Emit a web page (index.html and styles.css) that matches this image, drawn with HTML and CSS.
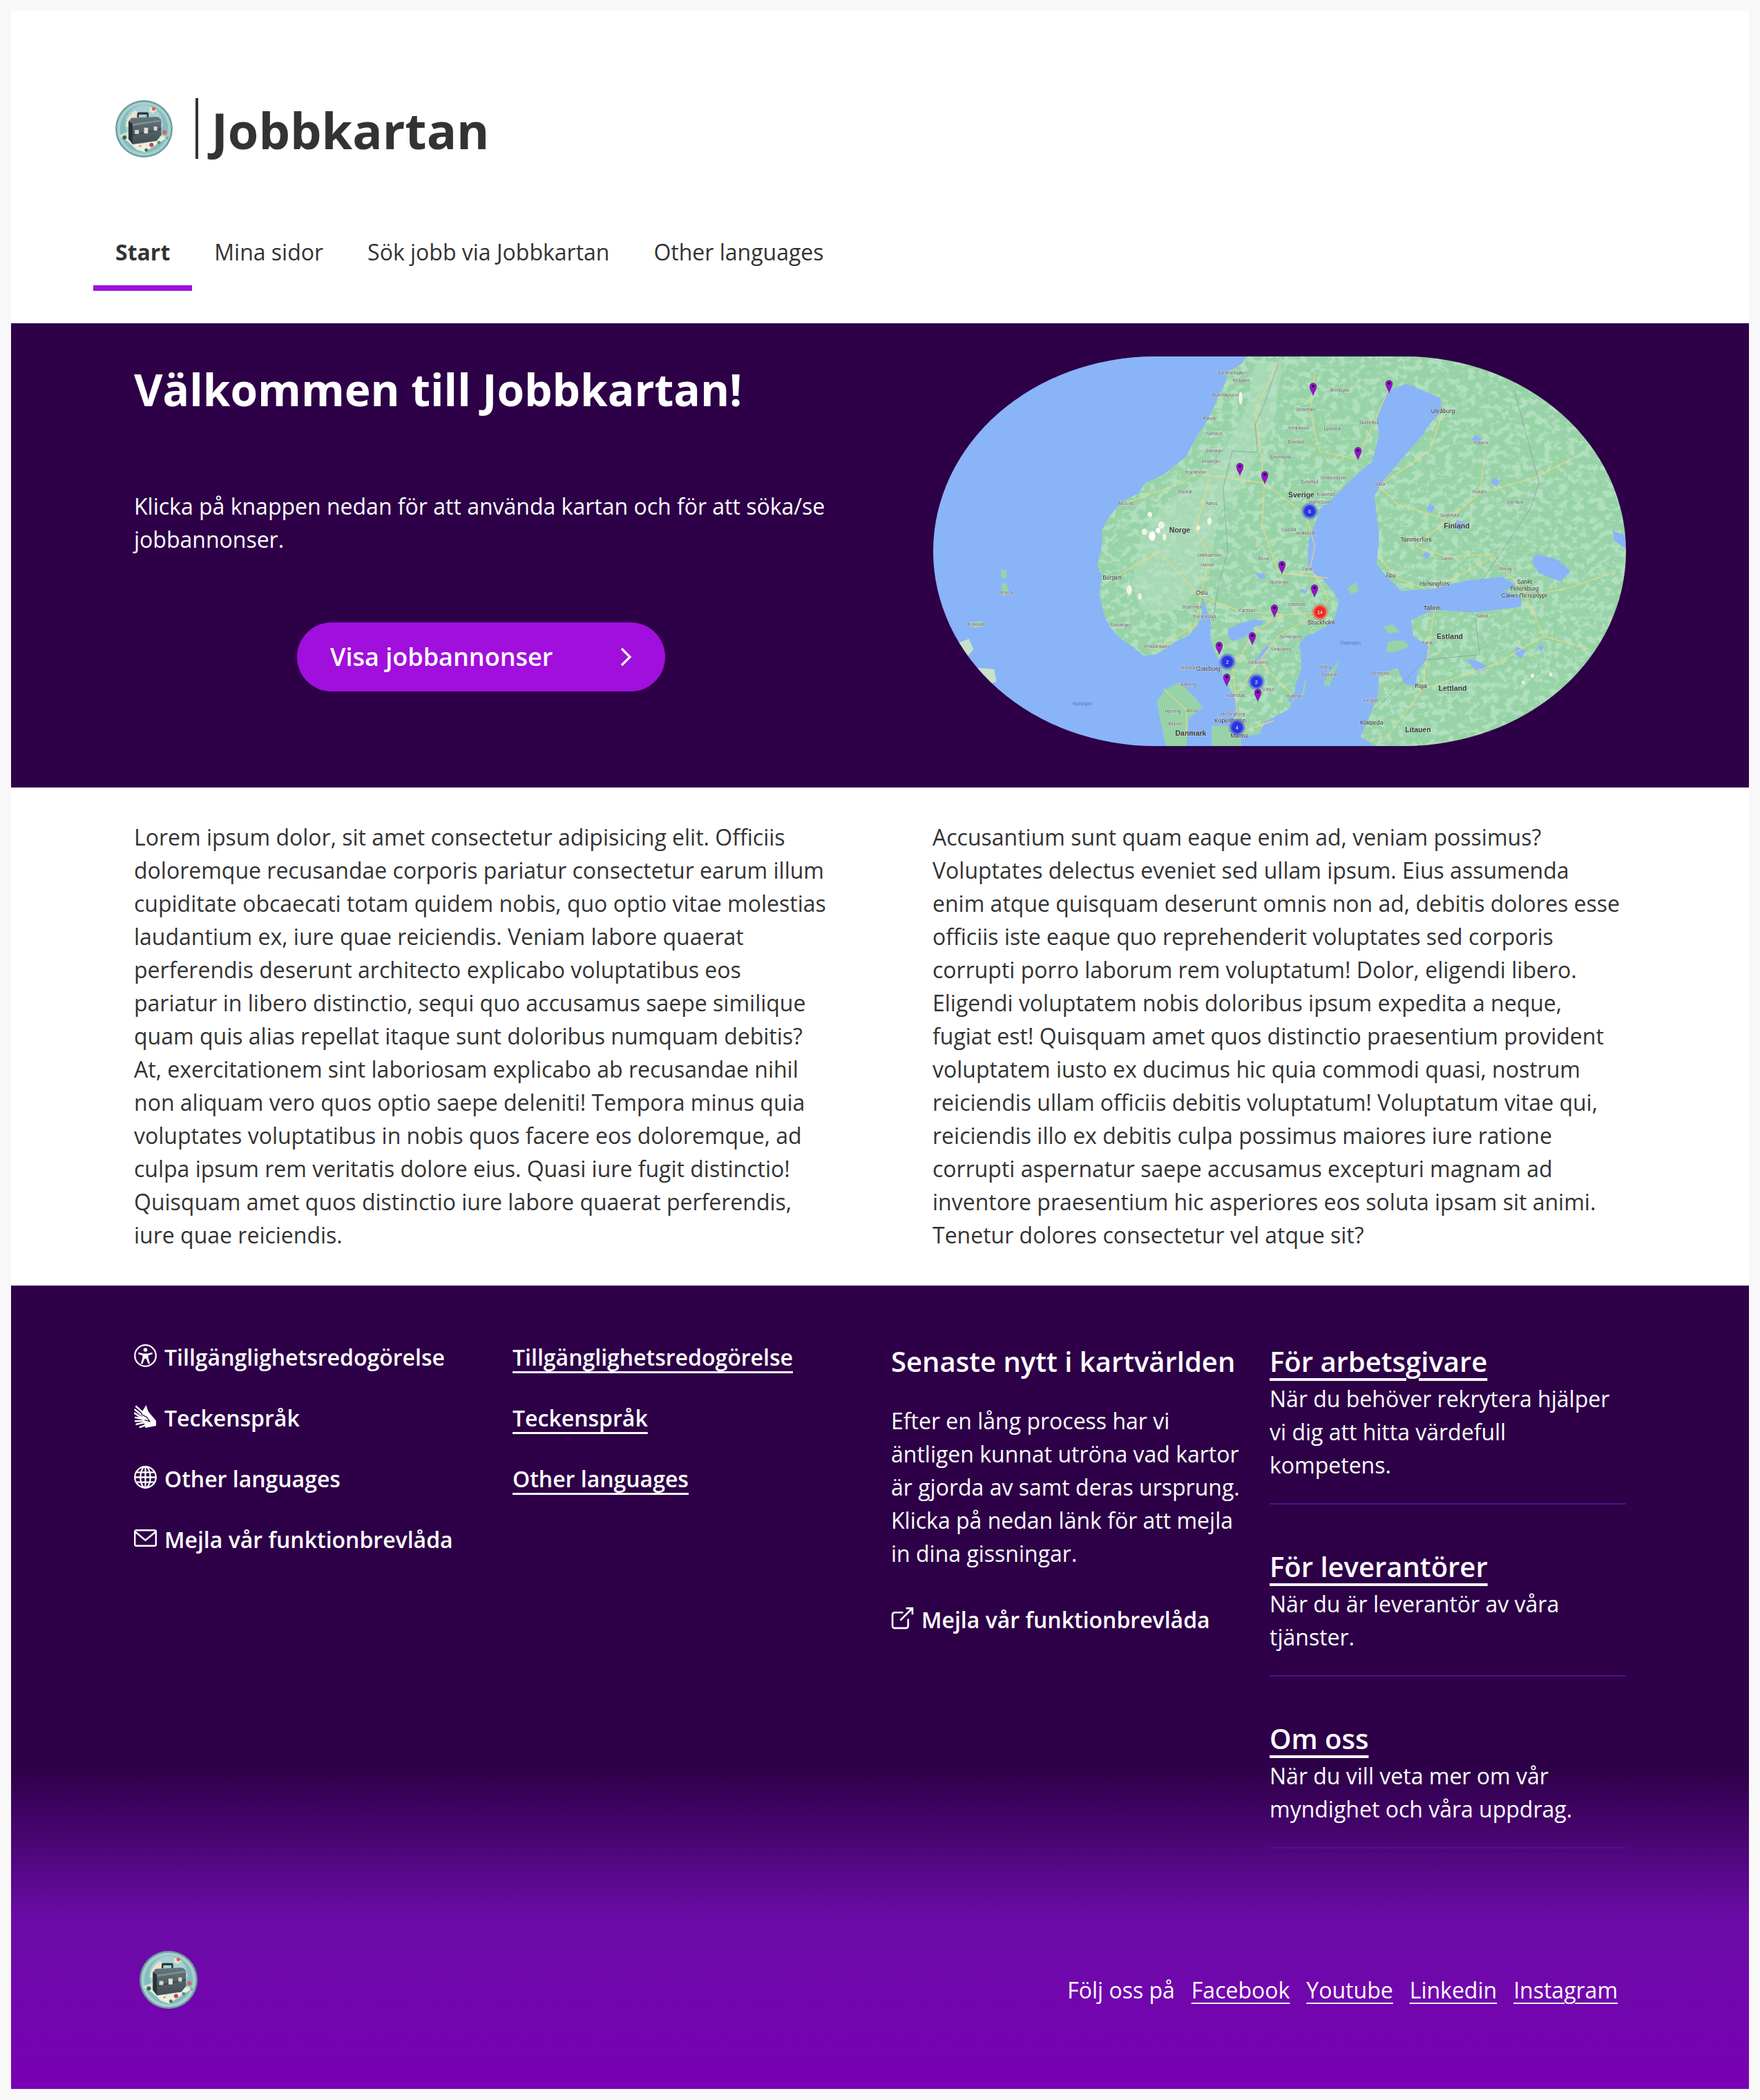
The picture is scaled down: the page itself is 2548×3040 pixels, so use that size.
FILE: index.html
```html
<!DOCTYPE html>
<html lang="sv">
<head>
<meta charset="utf-8">
<title>Jobbkartan</title>
<link rel="stylesheet" href="styles.css">
</head>
<body>
<svg class="defs" width="0" height="0" aria-hidden="true">
  <defs>
    <linearGradient id="case-grad" x1="0" y1="0" x2="0" y2="1"><stop offset="0" stop-color="#66767c"/><stop offset="1" stop-color="#414e54"/></linearGradient>
    <symbol id="logo" viewBox="0 0 100 100">
      <circle cx="50" cy="50" r="50" fill="#6a9fa0"/>
      <circle cx="50" cy="50" r="47" fill="#a9cfcd"/>
      <circle cx="50" cy="50" r="42" fill="#84bcbd"/>
      <circle cx="50" cy="42" r="33" fill="#a5d0d4"/>
      <path d="M18 46c1-13 8-23 17-28l7 5-5 10-5 3-2 12z" fill="#ece1cc"/>
      <path d="M60 12l13 5-7 6-7-3zM72 26l10 18-7 4-5-12z" fill="#ece1cc"/>
      <path d="M5 62l30-13 58 15-42 25z" fill="#cfe3cb"/>
      <path d="M14 65l23 21 14 5 38-25-14-3-28 14z" fill="#e9f0de"/>
      <path d="M38 30v-6q0-3 3-3h14q3 0 3 3v6h-3v-5H41v5z" fill="#2b3438"/>
      <path d="M23 37l5-6 46-2 6 5v27l-8 10-42 6-7-9z" fill="url(#case-grad)"/>
      <path d="M23 37l7 4v35l-7-9z" fill="#283236"/>
      <path d="M30 41l50-7v3l-50 8z" fill="#7d8d92"/>
      <path d="M30 60l50-11v2l-50 11z" fill="#37434a"/>
      <rect x="34" y="52" width="7" height="7" fill="#d6d6cb"/>
      <rect x="50" y="48" width="7" height="10" fill="#e0e0d6"/>
      <rect x="67" y="46" width="6" height="7" fill="#d6d6cb"/>
      <circle cx="67" cy="15" r="3.200" fill="#d8616a"/>
      <circle cx="86" cy="56" r="3.600" fill="#d8616a"/>
      <circle cx="63" cy="78" r="3.600" fill="#d33d4d"/>
      <circle cx="16" cy="65" r="3.600" fill="#3f5e60"/>
      <circle cx="54" cy="87" r="3" fill="#4b6f70"/>
      <circle cx="76" cy="74" r="3" fill="#5f8a86"/>
      <circle cx="90" cy="66" r="3" fill="#7fb3a8"/>
      <circle cx="43" cy="80" r="2" fill="#e0908c"/>
    </symbol>
    <symbol id="i-access" viewBox="0 0 32 32">
      <circle cx="16" cy="16" r="14.800" fill="none" stroke="#fff" stroke-width="2.200"/>
      <circle cx="16" cy="7.800" r="2.700" fill="#fff"/>
      <path d="M6.500 11.500l6.500 1.600h6l6.500-1.600.6 2.300-6.100 1.700v3.400l2.400 8-2.400.7-2.900-7.400h-2.200l-2.900 7.400-2.400-.7 2.400-8v-3.400L5.900 13.800z" fill="#fff"/>
    </symbol>
    <symbol id="i-sign" viewBox="0 0 32 32">
      <path d="M3 2l12 11M1.500 6.500l11 9M1 11.500l11 7M2 17.500l12 2M2 22.500l12-.5M3.500 27l11-2.500M8.500 31l8-3" fill="none" stroke="#fff" stroke-width="2.500" stroke-linecap="round"/>
      <path d="M11 10l6-10 3 9 11 13v7l-15 3-3-12z" fill="#fff"/>
      <path d="M10 13l8 4 4 6-7-2" fill="none" stroke="#2d0047" stroke-width="1.200"/>
    </symbol>
    <symbol id="i-globe" viewBox="0 0 32 32">
      <g fill="none" stroke="#fff" stroke-width="2.200">
        <circle cx="16" cy="16" r="14.800"/>
        <ellipse cx="16" cy="16" rx="7" ry="14.800"/>
        <path d="M16 1.200v29.600M1.200 16h29.600M3.500 9h25M3.500 23h25"/>
      </g>
    </symbol>
    <symbol id="i-mail" viewBox="0 0 32 32">
      <rect x="1.200" y="5" width="29.600" height="22" rx="2" fill="none" stroke="#fff" stroke-width="2.400"/>
      <path d="M2 7.500l14 11.500L30 7.500" fill="none" stroke="#fff" stroke-width="2.400"/>
    </symbol>
    <symbol id="i-ext" viewBox="0 0 32 32">
      <path d="M24 17v10a3 3 0 0 1-3 3H5a3 3 0 0 1-3-3V11a3 3 0 0 1 3-3h12" fill="none" stroke="#fff" stroke-width="2.600"/>
      <path d="M21 2h9v9M30 2L13 19" fill="none" stroke="#fff" stroke-width="2.600"/>
    </symbol>
    <symbol id="pin" viewBox="0 0 20 36">
      <path d="M10 35C8 27 .8 19 .8 10a9.200 9.200 0 0 1 18.400 0C19.200 19 12 27 10 35z" fill="#9b0ed6" stroke="#30103f" stroke-width=".8"/>
      <circle cx="10" cy="9.500" r="3.400" fill="#000"/>
    </symbol>
    <radialGradient id="halo-blue"><stop offset=".55" stop-color="#2a33e8"/><stop offset=".75" stop-color="#3a49dd" stop-opacity=".55"/><stop offset="1" stop-color="#5066d8" stop-opacity=".1"/></radialGradient>
    <radialGradient id="halo-red"><stop offset=".55" stop-color="#f0281e"/><stop offset=".75" stop-color="#f04a3a" stop-opacity=".55"/><stop offset="1" stop-color="#f06a5a" stop-opacity=".1"/></radialGradient>
    <filter id="mottle" x="0" y="0" width="100%" height="100%" color-interpolation-filters="sRGB">
      <feTurbulence type="fractalNoise" baseFrequency=".06 .04" numOctaves="3" seed="11"/>
      <feColorMatrix values="0 0 0 0 .7  0 0 0 0 .88  0 0 0 0 .75  4 4 0 0 -3.850"/>
    </filter>
    <clipPath id="land-clip">
      <path id="land" d="M700 42L690 70 660 100 655 140 640 190 625 250 610 300 590 350 570 420 540 460 520 490 480 520 465 560 430 590 400 650 385 700 385 760 380 800 375 830 385 870 380 950 392 1028 402 1063 423 1106 453 1141 478 1176 508 1167 543 1124 573 1098 593 1063 603 1028 604 950 612 990 624 1054 621 1098 631 1159 646 1202 649 1246 659 1289 674 1324 681 1368 676 1403 671 1437 676 1468 699 1477 729 1472 739 1429 764 1403 794 1376 804 1342 807 1289 820 1220 820 1167 815 1133 830 1098 847 1089 875 1063 895 1028 902 967 887 923 865 880 845 863 835 828 835 767 840 706 850 680 860 620 900 560 940 490 975 440 990 340 985 280 1000 200 1010 170 1050 145 1085 170 1125 200 1125 250 1100 300 1085 340 1055 400 1030 450 1000 510 980 570 985 640 990 720 985 830 1010 880 1040 930 1110 920 1180 890 1260 875 1290 910 1262 930 1300 950 1300 990 1270 995 1200 1010 1110 1000 1060 1040 1065 1100 1100 1140 1095 1185 1075 1230 1070 1290 1045 1280 1030 1220 990 1245 988 1320 970 1400 950 1480 980 1516 1529 1516 1529 42z"/>
    </clipPath>
  </defs>
</svg>

<div class="page">
  <header class="site-header">
    <a class="brand" href="#">
      <svg class="brand-logo"><use href="#logo"/></svg>
      <span class="brand-name">Jobbkartan</span>
    </a>
    <nav class="main-nav">
      <a class="nav-item is-active" href="#">Start</a>
      <a class="nav-item" href="#">Mina sidor</a>
      <a class="nav-item" href="#">Sök jobb via Jobbkartan</a>
      <a class="nav-item" href="#">Other languages</a>
    </nav>
  </header>

  <section class="hero">
    <div class="hero-text">
      <h1>Välkommen till Jobbkartan!</h1>
      <p>Klicka på knappen nedan för att använda kartan och för att söka/se jobbannonser.</p>
      <a class="cta" href="#">
        <span>Visa jobbannonser</span>
        <svg class="cta-arrow" viewBox="0 0 18 28"><path d="M3 2l12 12L3 26" fill="none" stroke="#fff" stroke-width="3.200"/></svg>
      </a>
    </div>
    <div class="map">
      <svg class="map-svg" viewBox="0 0 1003 564" preserveAspectRatio="none" role="img" aria-label="Karta över Sverige med jobbannonser">
        <rect width="1003" height="564" fill="#8ab4f8"/>
        <g transform="scale(.6633 .3827) translate(-17 -42)">
          <use href="#land" fill="#97d3a7"/>
          <g clip-path="url(#land-clip)">
            <rect x="17" y="42" width="1512" height="1474" filter="url(#mottle)"/>
            <path d="M720 60L700 240 650 400 600 500 520 600 470 720 450 900 470 1000 560 1000 620 860 640 640 700 500 760 300 780 60z" fill="#b5dfc2" opacity=".5"/>
            <g fill="#f3f2e8">
              <ellipse cx="490" cy="640" rx="5" ry="10"/><ellipse cx="515" cy="680" rx="7" ry="14"/><ellipse cx="478" cy="705" rx="6" ry="12"/>
              <ellipse cx="522" cy="725" rx="4" ry="12"/><ellipse cx="445" cy="925" rx="6" ry="18"/><ellipse cx="468" cy="950" rx="4" ry="12"/>
              <ellipse cx="688" cy="200" rx="4" ry="24"/><ellipse cx="620" cy="665" rx="5" ry="14"/><ellipse cx="595" cy="690" rx="4" ry="10"/>
              <ellipse cx="1325" cy="1250" rx="4" ry="8"/><ellipse cx="1365" cy="1245" rx="3" ry="7"/><ellipse cx="1305" cy="1275" rx="3" ry="7"/>
            </g>
            <g fill="#fff"><ellipse cx="495" cy="722" rx="7" ry="18"/><ellipse cx="508" cy="700" rx="5" ry="10"/></g>
          </g>
          <g fill="#8ab4f8">
            <path d="M660 1075l22-20 36-18 22 5-6 15-16 8-5 20-22 22-22 12-8-22z"/>
            <path d="M745 1135l6 5-24 65-14 0z"/>
            <path d="M1335 790l45 20 28 45-22 38-48-32-15-48z"/>
            <path d="M1500 700l29 20v50l-25-30z"/>
            <path d="M1180 1190l20 0 30 30-25 15z"/>
            <path d="M1160 660l18 14-8 30-16-18zM1240 500l12 12-4 24-14-16zM1100 600l12 10-6 24-12-12zM1200 340l14 12-8 20-14-16zM1090 780l12 8-6 20-10-10zM1290 1140l20 14-10 30-14-20zM1340 1130l10 8-5 20-8-10z"/>
            <path d="M790 1330h12l-4 30zM720 860l20 5 2 16-14 0zM820 920l14 8-4 12-12-8z"/>
          </g>
          <g fill="#97d3a7">
            <path d="M525 1300l30-25 35 60 15 35-30 40-5 106H525l-15-120-5-50z"/>
            <path d="M625 1440l60 0 5 76H625z"/>
            <path d="M868 1285l12-45 25-50-15 60-8 40z"/>
            <path d="M820 1330l8-60 4-8-6 60z"/>
            <path d="M1010 1120l35-5 10 25-30 20-20 0z"/>
            <path d="M1000 1065l20-10 15 30-25 5z"/>
            <path d="M920 920l20-25 5 35-15 10z"/>
            <path d="M97 1050l25-8 5 20-20 8zM165 850l12 0 0 30-12 0zM165 900l12 0 5 40-12 10z"/>
          </g>
          <path d="M115 1220l35 5 5 45-20 20-25-40zM65 1130l30-20 10 40-15 30z" fill="#c8e2c9"/>
          <g class="roads">
            <path d="M590 485L740 520 830 640 850 760 840 840 880 960 860 1010 780 1020 720 1080 690 1170 670 1200 680 1400M600 950L680 1000 780 1020M600 950L620 800 590 700 620 500M410 880L510 780 600 950M1090 920L1030 880 990 800M1110 920L1240 800 1310 940M1110 1010L1085 1300 1000 1500M1310 950L1350 1100 1240 1210 1085 1300M850 100L840 250 860 400 940 430M1010 170L980 290 945 420M1130 250L1100 400 1000 520M690 1190L730 1200 800 1320M760 1420L680 1470M1220 420L1210 560 1140 660 1070 760M740 520L720 250 770 60M430 600L560 520 590 485M500 1150L590 1060 600 960M860 1010L770 1100 730 1190 680 1320M740 520L735 680 770 860 880 880M1140 660L1030 600 990 530M1070 760L1140 800 1240 790M1350 1100L1450 1150M1210 560L1330 500 1420 420M1300 950L1400 920 1500 860M520 1300L570 1380 570 1480" />
          </g>
          <path d="M650 540L670 400 725 405 720 300 740 220 770 70M650 540L660 780 640 900 625 1075M1285 170L1340 520 1320 620 1250 800 1210 900M1200 1030L1210 1170 1090 1190 980 1380" fill="none" stroke="#8c9aa0" stroke-width="1.500"/>
        </g>
        <g class="map-labels">
          <text x="533" y="204" class="lbl-lg">Sverige</text>
          <text x="357" y="255" class="lbl-lg">Norge</text>
          <text x="758" y="249" class="lbl-lg">Finland</text>
          <text x="748" y="409" class="lbl-lg">Estland</text>
          <text x="752" y="484" class="lbl-lg">Lettland</text>
          <text x="702" y="544" class="lbl-lg">Litauen</text>
          <text x="373" y="549" class="lbl-lg">Danmark</text>
          <text x="443" y="552" class="lbl-md">Malmö</text>
          <text x="430" y="530" class="lbl-md">Köpenhamn</text>
          <text x="389" y="345" class="lbl-md">Oslo</text>
          <text x="726" y="332" class="lbl-md">Helsingfors</text>
          <text x="722" y="367" class="lbl-md">Tallinn</text>
          <text x="706" y="480" class="lbl-md">Riga</text>
          <text x="259" y="323" class="lbl-md">Bergen</text>
          <text x="699" y="268" class="lbl-md">Tammerfors</text>
          <text x="738" y="82" class="lbl-md">Uleåborg</text>
          <text x="856" y="329" class="lbl-md">Sankt</text>
          <text x="856" y="339" class="lbl-md">Petersburg</text>
          <text x="856" y="349" class="lbl-md">Санкт-Петербург</text>
          <text x="562" y="388" class="lbl-md">Stockholm</text>
          <text x="398" y="455" class="lbl-md">Göteborg</text>
          <text x="635" y="533" class="lbl-md">Klaipeda</text>
          <text x="662" y="320" class="lbl-md">Åbo</text>
          <text x="518" y="408" class="lbl">Norrköping</text>
          <text x="504" y="426" class="lbl">Linköping</text>
          <text x="470" y="445" class="lbl">Jönköping</text>
          <text x="438" y="493" class="lbl">Halmstad</text>
          <text x="434" y="520" class="lbl">Helsingborg</text>
          <text x="380" y="170" class="lbl">Trondheim</text>
          <text x="526" y="361" class="lbl">Västerås</text>
          <text x="541" y="310" class="lbl">Gävle</text>
          <text x="501" y="329" class="lbl">Borlänge</text>
          <text x="539" y="258" class="lbl">Hudiksvall</text>
          <text x="515" y="253" class="lbl">Ljusdal</text>
          <text x="478" y="295" class="lbl">Mora</text>
          <text x="631" y="98" class="lbl">Skellefteå</text>
          <text x="589" y="51" class="lbl">Arvidsjaur</text>
          <text x="539" y="79" class="lbl">Storuman</text>
          <text x="529" y="106" class="lbl">Vilhelmina</text>
          <text x="578" y="107" class="lbl">Lycksele</text>
          <text x="525" y="126" class="lbl">Dorotea</text>
          <text x="503" y="148" class="lbl">Strömsund</text>
          <text x="579" y="178" class="lbl">Örnsköldsvik</text>
          <text x="545" y="184" class="lbl">Sollefteå</text>
          <text x="569" y="202" class="lbl">Kramfors</text>
          <text x="561" y="213" class="lbl">Härnösand</text>
          <text x="433" y="26" class="lbl">Sandnessjøen</text>
          <text x="446" y="37" class="lbl">Mosjøen</text>
          <text x="423" y="58" class="lbl">Brønnøysund</text>
          <text x="400" y="92" class="lbl">Rørvik</text>
          <text x="407" y="114" class="lbl">Namsos</text>
          <text x="407" y="139" class="lbl">Steinkjer</text>
          <text x="402" y="154" class="lbl">Levanger</text>
          <text x="279" y="215" class="lbl">Ålesund</text>
          <text x="364" y="198" class="lbl">Oppdal</text>
          <text x="403" y="215" class="lbl">Røros</text>
          <text x="400" y="290" class="lbl">Lillehammer</text>
          <text x="397" y="304" class="lbl">Hamar</text>
          <text x="271" y="391" class="lbl">Stavanger</text>
          <text x="375" y="365" class="lbl">Drammen</text>
          <text x="393" y="379" class="lbl">Fredrikstad</text>
          <text x="454" y="370" class="lbl">Karlstad</text>
          <text x="324" y="422" class="lbl">Kristiansand</text>
          <text x="568" y="452" class="lbl">Visby</text>
          <text x="573" y="463" class="lbl">Gotland</text>
          <text x="523" y="494" class="lbl">Kalmar</text>
          <text x="485" y="484" class="lbl">Växjö</text>
          <text x="647" y="187" class="lbl">Vasa</text>
          <text x="791" y="198" class="lbl">Kuopio</text>
          <text x="842" y="213" class="lbl">Joensuu</text>
          <text x="744" y="295" class="lbl">Lahtis</text>
          <text x="747" y="232" class="lbl">Jyväskylä</text>
          <text x="793" y="127" class="lbl">Kajana</text>
          <text x="716" y="417" class="lbl">Pärnu</text>
          <text x="647" y="461" class="lbl">Ventspils</text>
          <text x="633" y="500" class="lbl">Liepāja</text>
          <text x="62" y="390" class="lbl">Kirkwall</text>
          <text x="105" y="344" class="lbl">Lerwick</text>
          <text x="828" y="310" class="lbl">Viborg</text>
          <text x="795" y="378" class="lbl">Narva</text>
          <text x="369" y="477" class="lbl">Aalborg</text>
          <text x="375" y="515" class="lbl">Århus</text>
          <text x="347" y="516" class="lbl">Herning</text>
          <text x="350" y="534" class="lbl">Billund</text>
          <text x="370" y="453" class="lbl">Hirtshals</text>
          <text x="604" y="417" class="water">Östersjön</text>
          <text x="216" y="505" class="water">Nordsjön</text>
        </g>
        <g class="clusters">
          <circle cx="545" cy="224" r="13" fill="url(#halo-blue)"/><text x="545" y="227" class="c-num">6</text>
          <circle cx="560" cy="370" r="13" fill="url(#halo-red)"/><text x="560" y="373" class="c-num">14</text>
          <circle cx="426" cy="442" r="13" fill="url(#halo-blue)"/><text x="426" y="445" class="c-num">2</text>
          <circle cx="468" cy="471" r="13" fill="url(#halo-blue)"/><text x="468" y="474" class="c-num">2</text>
          <circle cx="440" cy="537" r="13" fill="url(#halo-blue)"/><text x="440" y="540" class="c-num">4</text>
        </g>
        <g class="pins">
          <use href="#pin" x="543" y="38" width="14" height="19"/>
          <use href="#pin" x="653" y="34" width="14" height="19"/>
          <use href="#pin" x="608" y="131" width="14" height="19"/>
          <use href="#pin" x="437" y="154" width="14" height="19"/>
          <use href="#pin" x="473" y="166" width="14" height="19"/>
          <use href="#pin" x="498" y="296" width="14" height="19"/>
          <use href="#pin" x="545" y="330" width="14" height="19"/>
          <use href="#pin" x="487" y="359" width="14" height="19"/>
          <use href="#pin" x="455" y="399" width="14" height="19"/>
          <use href="#pin" x="407" y="413" width="14" height="19"/>
          <use href="#pin" x="418" y="459" width="14" height="19"/>
          <use href="#pin" x="463" y="481" width="14" height="19"/>
        </g>
      </svg>
    </div>
  </section>

  <section class="intro">
    <p>Lorem ipsum dolor, sit amet consectetur adipisicing elit. Officiis doloremque recusandae corporis pariatur consectetur earum illum cupiditate obcaecati totam quidem nobis, quo optio vitae molestias laudantium ex, iure quae reiciendis. Veniam labore quaerat perferendis deserunt architecto explicabo voluptatibus eos pariatur in libero distinctio, sequi quo accusamus saepe similique quam quis alias repellat itaque sunt doloribus numquam debitis? At, exercitationem sint laboriosam explicabo ab recusandae nihil non aliquam vero quos optio saepe deleniti! Tempora minus quia voluptates voluptatibus in nobis quos facere eos doloremque, ad culpa ipsum rem veritatis dolore eius. Quasi iure fugit distinctio! Quisquam amet quos distinctio iure labore quaerat perferendis, iure quae reiciendis.</p>
    <p>Accusantium sunt quam eaque enim ad, veniam possimus? Voluptates delectus eveniet sed ullam ipsum. Eius assumenda enim atque quisquam deserunt omnis non ad, debitis dolores esse officiis iste eaque quo reprehenderit voluptates sed corporis corrupti porro laborum rem voluptatum! Dolor, eligendi libero. Eligendi voluptatem nobis doloribus ipsum expedita a neque, fugiat est! Quisquam amet quos distinctio praesentium provident voluptatem iusto ex ducimus hic quia commodi quasi, nostrum reiciendis ullam officiis debitis voluptatum! Voluptatum vitae qui, reiciendis illo ex debitis culpa possimus maiores iure ratione corrupti aspernatur saepe accusamus excepturi magnam ad inventore praesentium hic asperiores eos soluta ipsam sit animi. Tenetur dolores consectetur vel atque sit?</p>
  </section>

  <footer class="site-footer">
    <div class="footer-cols">
      <ul class="link-list">
        <li><a class="icon-link" href="#"><svg class="icon"><use href="#i-access"/></svg>Tillgänglighetsredogörelse</a></li>
        <li><a class="icon-link" href="#"><svg class="icon"><use href="#i-sign"/></svg>Teckenspråk</a></li>
        <li><a class="icon-link" href="#"><svg class="icon"><use href="#i-globe"/></svg>Other languages</a></li>
        <li><a class="icon-link" href="#"><svg class="icon"><use href="#i-mail"/></svg>Mejla vår funktionbrevlåda</a></li>
      </ul>
      <ul class="link-list">
        <li><a class="under-link" href="#">Tillgänglighetsredogörelse</a></li>
        <li><a class="under-link" href="#">Teckenspråk</a></li>
        <li><a class="under-link" href="#">Other languages</a></li>
      </ul>
      <div class="news">
        <h2>Senaste nytt i kartvärlden</h2>
        <p>Efter en lång process har vi äntligen kunnat utröna vad kartor är gjorda av samt deras ursprung. Klicka på nedan länk för att mejla in dina gissningar.</p>
        <a class="icon-link" href="#"><svg class="icon"><use href="#i-ext"/></svg>Mejla vår funktionbrevlåda</a>
      </div>
      <div class="promos">
        <article class="promo">
          <a class="promo-title" href="#">För arbetsgivare</a>
          <p>När du behöver rekrytera hjälper vi dig att hitta värdefull kompetens.</p>
        </article>
        <article class="promo">
          <a class="promo-title" href="#">För leverantörer</a>
          <p>När du är leverantör av våra tjänster.</p>
        </article>
        <article class="promo">
          <a class="promo-title" href="#">Om oss</a>
          <p>När du vill veta mer om vår myndighet och våra uppdrag.</p>
        </article>
      </div>
    </div>
    <div class="footer-bottom">
      <svg class="footer-logo"><use href="#logo"/></svg>
      <div class="social">
        <span>Följ oss på</span>
        <a href="#">Facebook</a>
        <a href="#">Youtube</a>
        <a href="#">Linkedin</a>
        <a href="#">Instagram</a>
      </div>
    </div>
  </footer>
</div>
</body>
</html>
```

FILE: styles.css
```css
* { box-sizing: border-box; }
html, body { margin: 0; padding: 0; }
body {
  background: #f8f8f8;
  padding: 16px;
  font-family: "Open Sans", "Noto Sans", sans-serif;
  font-size: 32px;
  line-height: 48px;
  color: #333;
}
.defs { position: absolute; }
a { color: inherit; }
p { margin: 0; }
.page { background: #fff; width: 2516px; height: 3008px; }

.site-header { height: 452px; padding: 126px 0 0 119px; display: flex; flex-direction: column; }
.brand { display: flex; align-items: flex-start; text-decoration: none; color: #333; height: 88px; }
.brand-logo { width: 83px; height: 83px; margin: 3px 33px 0 32px; }
.brand-name {
  border-left: 4px solid #333;
  padding: 2px 0 0 19px;
  font-size: 72px;
  font-weight: 700;
  line-height: 88px;
  height: 88px;
  display: block;
}
.main-nav { display: flex; margin-top: 105px; }
.nav-item {
  display: block;
  padding: 0 32px;
  height: 86px;
  line-height: 60px;
  text-decoration: none;
  color: #333;
}
.nav-item.is-active { font-weight: 700; border-bottom: 8px solid #a00fdb; }

.hero {
  background: #2d0047;
  height: 672px;
  display: flex;
  padding: 48px 178px 60px;
  gap: 154px;
  color: #fff;
}
.hero-text { width: 1003px; flex: none; }
.hero h1 { margin: 21px 0 118px; font-size: 64px; line-height: 54px; font-weight: 700; }
.cta {
  display: flex;
  align-items: center;
  justify-content: space-between;
  width: 533px;
  height: 100px;
  margin: 96px 0 0 236px;
  padding: 0 48px;
  border-radius: 50px;
  background: #a00fdb;
  color: #fff;
  text-decoration: none;
  font-size: 36px;
  font-weight: 600;
}
.cta-arrow { width: 18px; height: 28px; }
.map { width: 1003px; height: 564px; flex: none; border-radius: 32% / 50%; overflow: hidden; }
.map-svg { display: block; width: 100%; height: 100%; filter: blur(.45px); }
.roads { fill: none; stroke: #f3d67e; stroke-width: 1.1px; }
.roads path { vector-effect: non-scaling-stroke; }
.map-labels text { font-family: "Liberation Sans", sans-serif; text-anchor: middle; fill: #333; stroke: #fff; stroke-width: .5px; paint-order: stroke; }
.map-labels .lbl { font-size: 6.5px; fill: #4a4a4a; }
.map-labels .lbl-md { font-size: 8.5px; fill: #222; }
.map-labels .lbl-lg { font-size: 10.5px; font-weight: 700; fill: #333; }
.map-labels .water { font-size: 7px; fill: #4a78c8; stroke: none; }
.c-num { font-family: "Liberation Sans", sans-serif; font-size: 7px; fill: #fff; text-anchor: middle; }

.intro {
  display: flex;
  gap: 153px;
  height: 721px;
  padding: 48px 178px 0;
}
.intro p { width: 1003px; flex: none; }

.site-footer {
  height: 1163px;
  color: #fff;
  background: linear-gradient(to bottom, #2d0047 0, #2d0047 60%, #6a0ca6 79%, #7a00b5 100%);
  padding: 80px 178px 0;
  display: flex;
  flex-direction: column;
}
.footer-cols { display: grid; grid-template-columns: repeat(4, 548px); height: 840px; }
.link-list { list-style: none; margin: 0; padding: 0; }
.link-list li { height: 88px; }
.icon-link { display: flex; align-items: center; gap: 11px; text-decoration: none; font-weight: 600; white-space: nowrap; }
.icon { width: 33px; height: 33px; flex: none; margin-top: -6px; }
.under-link { font-weight: 600; text-decoration: underline; text-decoration-thickness: 3px; text-underline-offset: 8px; text-decoration-skip-ink: none; }
.news { padding-right: 32px; }
.news h2 { margin: 0 0 32px; font-size: 40px; line-height: 60px; font-weight: 600; }
.news .icon-link { margin-top: 48px; }
.promo { width: 516px; border-bottom: 2px solid #5a0a92; padding-bottom: 31px; }
.promo + .promo { margin-top: 60px; }
.promo-title { display: block; width: max-content; font-size: 40px; line-height: 60px; font-weight: 600; text-decoration: underline; text-decoration-thickness: 4px; text-underline-offset: 9px; }
.footer-bottom { display: flex; justify-content: space-between; align-items: flex-end; padding: 0 12px 0 8px; margin-top: 44px; }
.footer-logo { width: 84px; height: 84px; margin: -39px 0 -3px; }
.social { display: flex; gap: 24px; margin-top: 0; padding-top: 32px; }
.social a { text-decoration: underline; text-decoration-thickness: 2px; text-underline-offset: 6px; }
```
